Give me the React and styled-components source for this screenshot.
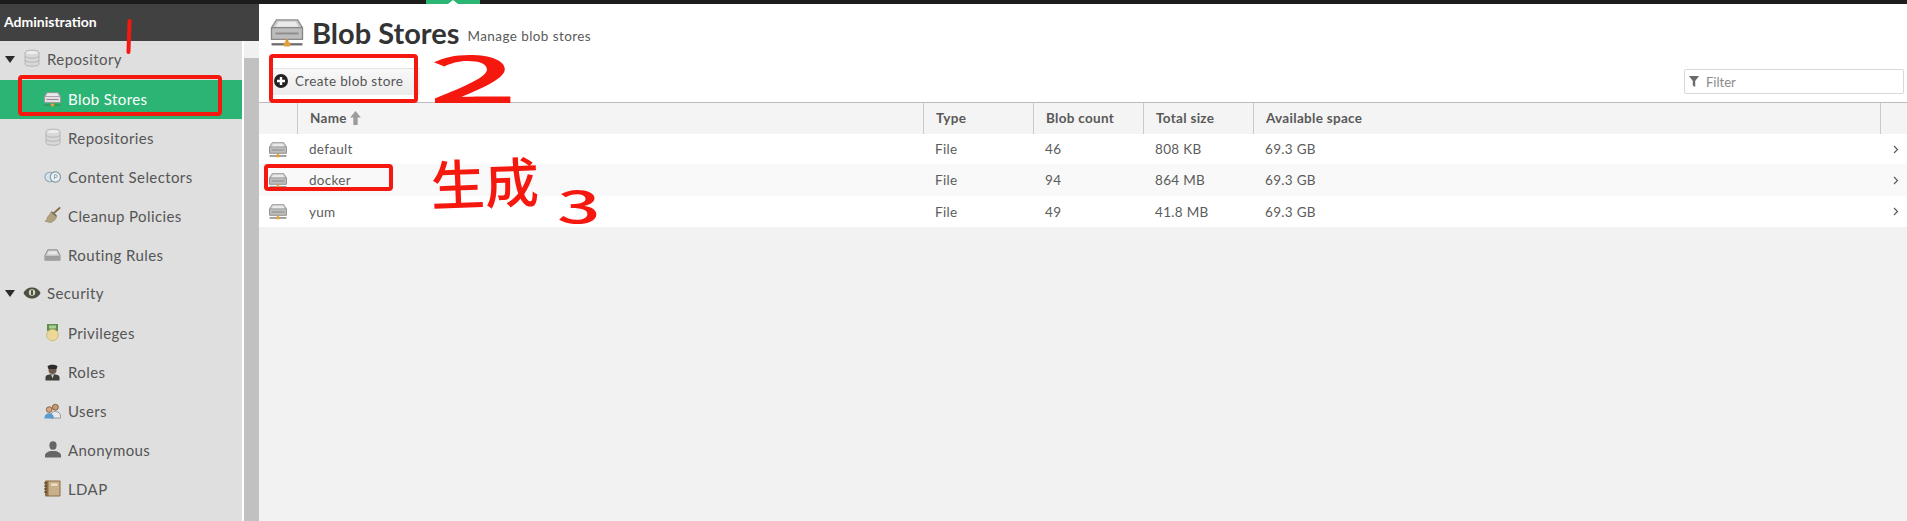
import React from "react";
import styled, { createGlobalStyle } from "styled-components";

const Global = createGlobalStyle`
  html, body { margin: 0; padding: 0; height: 521px; overflow: hidden; background: #f2f2f2; }
  * { box-sizing: border-box; }
  #root { height: 521px; }
`;

const Page = styled.div`
  position: relative;
  width: 1907px;
  height: 521px;
  overflow: hidden;
  display: flex;
  flex-direction: column;
  font-family: Lato, "Liberation Sans", sans-serif;
  color: #333;
`;
const TopBar = styled.div`
  position: relative;
  height: 4px;
  flex: none;
  background: #1c1c1c;
`;
const ActiveTab = styled.div`
  position: absolute;
  left: 426px;
  top: 0;
  width: 54px;
  height: 4px;
  background: #2ab573;
  &::after {
    content: "";
    position: absolute;
    left: 22px;
    top: 0;
    border: 5px solid transparent;
    border-top: 0;
    border-bottom: 4px solid #fff;
  }
`;
const Main = styled.div`
  flex: 1;
  min-height: 0;
  display: flex;
`;
const Sidebar = styled.aside`
  width: 259px;
  flex: none;
  display: flex;
  flex-direction: column;
  background: #fff;
`;
const SideHeader = styled.div`
  height: 37px;
  flex: none;
  background: #414141;
  color: #fff;
  font-size: 14px;
  font-weight: 700;
  display: flex;
  align-items: center;
  padding-left: 4px;
  padding-bottom: 2px;
`;
const SideBody = styled.div`
  flex: 1;
  min-height: 0;
  display: flex;
  gap: 2px;
`;
const Tree = styled.nav`
  width: 242px;
  flex: none;
  background: #dfdfdf;
  overflow: hidden;
`;
const Scrollbar = styled.div`
  width: 15px;
  flex: none;
  background: #c1c1c1;
  &::before {
    content: "";
    display: block;
    height: 17px;
    background: #f1f1f1;
  }
`;
const Row = styled.div`
  height: 39px;
  display: flex;
  align-items: center;
  padding-left: ${(p) => (p.$top ? 5 : 44)}px;
  padding-bottom: ${(p) => (p.$top ? 4 : 2)}px;
  gap: ${(p) => (p.$top ? 0 : 7)}px;
  font-size: 15px;
  letter-spacing: 0.4px;
  color: ${(p) => (p.$active ? "#fff" : "#555")};
  background: ${(p) => (p.$active ? "#2bb474" : "transparent")};
`;
const Caret = styled.span`
  width: 0;
  height: 0;
  border-left: 5px solid transparent;
  border-right: 5px solid transparent;
  border-top: 7px solid #2a2a2a;
  margin-right: 8px;
  margin-top: 2px;
  flex: none;
`;
const TopIconBox = styled.span`
  width: 18px;
  height: 22px;
  flex: none;
  margin-right: 6px;
  display: flex;
  align-items: center;
  justify-content: center;
`;
const IconBox = styled.span`
  width: 17px;
  height: 18px;
  flex: none;
  display: flex;
  align-items: center;
  justify-content: center;
`;
const Content = styled.main`
  flex: 1;
  min-width: 0;
  display: flex;
  flex-direction: column;
  background: #f2f2f2;
`;
const Head = styled.div`
  height: 98px;
  flex: none;
  background: #fff;
  display: flex;
  flex-direction: column;
`;
const TitleRow = styled.div`
  height: 48px;
  padding: 9px 0 0 11px;
  display: flex;
  align-items: center;
  flex: none;
`;
const Title = styled.h1`
  margin: 0 0 0 8px;
  font-size: 29px;
  font-weight: 700;
  color: #333;
  line-height: 30px;
`;
const Sub = styled.span`
  margin: 6px 0 0 8px;
  font-size: 13.5px;
  letter-spacing: 0.42px;
  color: #5a5a5a;
`;
const Toolbar = styled.div`
  flex: 1;
  display: flex;
  align-items: flex-start;
  justify-content: space-between;
  padding: 16px 3px 0 11px;
`;
const Button = styled.button`
  height: 27px;
  width: 150px;
  padding: 0 0 2px 4px;
  border: 0;
  border-top: 1px solid #e4e4e4;
  background: linear-gradient(#f8f8f8, #ececec);
  display: flex;
  align-items: center;
  gap: 7px;
  font: 13.5px Lato, "Liberation Sans", sans-serif;
  letter-spacing: 0.35px;
  color: #555;
`;
const FilterBox = styled.label`
  width: 220px;
  height: 25px;
  margin-top: 1px;
  border: 1px solid #d9d9d9;
  border-radius: 2px;
  background: #fff;
  display: flex;
  align-items: center;
  gap: 7px;
  padding-left: 4px;
  font-size: 13px;
  color: #8a8a8a;
`;
const Table = styled.div`
  display: flex;
  flex-direction: column;
`;
const columns = "39px 626px 110px 110px 110px 627px 26px";
const HeaderRow = styled.div`
  display: grid;
  grid-template-columns: ${columns};
  height: 32px;
  background: #f4f4f4;
  border-top: 1px solid #bcbcbc;
`;
const HeaderCell = styled.div`
  display: flex;
  align-items: center;
  gap: 3px;
  padding-left: ${(p) => (p.$empty ? 0 : 12)}px;
  padding-bottom: 2px;
  font-size: 13.5px;
  font-weight: 700;
  letter-spacing: 0.3px;
  color: #595959;
  border-right: ${(p) => (p.$last ? 0 : "1px solid #c9c9c9")};
`;
const DataRow = styled.div`
  display: grid;
  grid-template-columns: ${columns};
  height: ${(p) => p.$h}px;
  background: ${(p) => (p.$alt ? "#f9f9f9" : "#fff")};
  align-items: center;
`;
const Cell = styled.div`
  padding-left: 11px;
  font-size: 13.5px;
  letter-spacing: 0.3px;
  color: #5c5c5c;
`;
const IconCell = styled.div`
  display: flex;
  justify-content: flex-start;
  padding-left: 10px;
`;
const ChevronCell = styled.div`
  display: flex;
  justify-content: flex-end;
  padding-right: 8px;
`;
const RedBox = styled.div`
  position: absolute;
  left: ${(p) => p.$x}px;
  top: ${(p) => p.$y}px;
  width: ${(p) => p.$w}px;
  height: ${(p) => p.$h}px;
  border: 4px solid #f5180f;
  border-radius: 4px;
  pointer-events: none;
`;
const Ink = styled.span`
  position: absolute;
  left: ${(p) => p.$x}px;
  top: ${(p) => p.$y}px;
  font-family: "Noto Sans CJK SC", "Liberation Sans", sans-serif;
  font-size: ${(p) => p.$size}px;
  font-weight: 500;
  line-height: 0.75;
  color: #f5180f;
  transform: ${(p) => p.$t || "none"};
  transform-origin: left top;
  white-space: nowrap;
`;
const InkMark = styled.div`
  position: absolute;
  left: 127px;
  top: 19px;
  width: 4px;
  height: 35px;
  border-radius: 2px;
  background: #f5180f;
  transform: rotate(2deg);
`;

const Database = ({ size = 17 }) => (
  <svg width={size} height={size * 1.15} viewBox="0 0 16 18">
    <path d="M1 3.5C1 1.8 4 1 8 1s7 .8 7 2.5v11c0 1.7-3 2.5-7 2.5s-7-.8-7-2.5z" fill="#d8d8d8" stroke="#b5b5b5" />
    <path d="M1 7c1 1.5 4 2 7 2s6-.5 7-2M1 11c1 1.5 4 2 7 2s6-.5 7-2" fill="none" stroke="#b5b5b5" />
    <ellipse cx="8" cy="3.4" rx="6" ry="1.6" fill="#eee" />
  </svg>
);
const BlobIcon = ({ w = 18, h = 18, light }) => (
  <svg width={w} height={h} viewBox="0 0 34 30">
    <path d="M6 2h22l5 8v12H1V10z" fill={light ? "#d5cfd6" : "#c9c9c9"} stroke="#8d8d8d" strokeWidth="1.4" />
    <rect x="1" y="10" width="32" height="12" rx="1" fill={light ? "#e4dfe6" : "#bdbdbd"} stroke="#858585" strokeWidth="1.2" />
    <path d="M8 4h18l3 5H5z" fill="#eaeaea" />
    <rect x="5" y="15" width="24" height="2" fill="#8e8e8e" />
    <rect x="15.5" y="22" width="3" height="4" fill="#d9963a" />
    <rect x="1" y="26" width="32" height="2.4" fill={light ? "#3d8b4f" : "#6f6f6f"} />
    <rect x="13.5" y="25" width="7" height="4.5" rx="1" fill="#e0a040" />
  </svg>
);
const Venn = () => (
  <svg width="18" height="14" viewBox="0 0 18 14">
    <circle cx="6" cy="7" r="5" fill="#d7e3ea" stroke="#8fa6b4" strokeWidth="1.2" />
    <circle cx="12" cy="7" r="5.4" fill="#eef3f6" stroke="#7f97a6" strokeWidth="1.2" />
    <path d="M11 4.5v5M11 4.7h1.8a1.4 1.4 0 010 2.8H11" fill="none" stroke="#7f97a6" strokeWidth="0.9" />
  </svg>
);
const Broom = () => (
  <svg width="19" height="19" viewBox="0 0 18 18">
    <path d="M11 6L16.5 1" stroke="#8b6a45" strokeWidth="2" strokeLinecap="round" />
    <path d="M8 4.5l5.5 5c-.6 3.4-3.4 6.4-7 7L1 15c2.500-.8 2.500-2 2.200-3.400C4.200 10 6.200 8 8 4.500z" fill="#b0a27c" stroke="#8c8062" strokeWidth=".6" />
    <path d="M8.500 5.500l4.500 4" stroke="#69695a" strokeWidth="1.600" />
  </svg>
);
const Tray = () => (
  <svg width="18" height="14" viewBox="0 0 18 13">
    <path d="M4 1h10l3 6v5H1V7z" fill="#c8c8c8" stroke="#8a8a8a" />
    <path d="M1.500 7.500h15v4h-15z" fill="#9d9d9d" />
    <path d="M5 2.500h8l1.500 3.500h-11z" fill="#e6e6e6" />
  </svg>
);
const Eye = () => (
  <svg width="18" height="14" viewBox="0 0 18 13">
    <path d="M.5 6.500C2.500 2.500 5.500 1 9 1s6.500 1.500 8.500 5.500C15.500 10.500 12.500 12 9 12S2.500 10.500.5 6.500z" fill="#4b5340" />
    <circle cx="9" cy="6" r="3.200" fill="#d6d6c4" />
    <rect x="8.200" y="3.800" width="1.600" height="4.500" fill="#2e2e22" />
  </svg>
);
const Medal = () => (
  <svg width="13" height="19" viewBox="0 0 13 18">
    <rect x="1" y="0.500" width="11" height="7" fill="#5e8f4e" />
    <rect x="3" y="2" width="7" height="3" fill="#a9d094" />
    <circle cx="6.500" cy="11.500" r="5.800" fill="#ecd99a" stroke="#c9b06a" strokeWidth=".8" />
  </svg>
);
const Officer = () => (
  <svg width="15" height="18" viewBox="0 0 15 18">
    <path d="M0.500 17.500v-3c0-2 2.500-3.200 7-3.200s7 1.200 7 3.200v3z" fill="#3f4138" />
    <path d="M6 11.500h3l-1.500 4z" fill="#cfcfcf" />
    <circle cx="7.500" cy="7" r="4" fill="#6e5a4a" />
    <path d="M2.500 3.500C3.500 1 11.500 1 12.500 3.500L11.500 6h-8z" fill="#2b2b2b" />
  </svg>
);
const People = () => (
  <svg width="18" height="18" viewBox="0 0 18 17">
    <circle cx="12" cy="4.500" r="3.200" fill="#c79a72" stroke="#6a4a33" strokeWidth=".8" />
    <path d="M7 14c0-3 2-5 5-5s5.500 2 5.500 5v2H7z" fill="#e9e9e9" stroke="#777" strokeWidth=".7" />
    <circle cx="5.500" cy="7" r="3" fill="#d8a781" stroke="#6a4a33" strokeWidth=".8" />
    <path d="M.5 16c0-3 2-5.200 5-5.200s5 2.200 5 5.200v.5h-10z" fill="#5a9bd0" />
  </svg>
);
const Person = () => (
  <svg width="16" height="17" viewBox="0 0 16 17">
    <ellipse cx="8" cy="4.500" rx="3.600" ry="4.200" fill="#666" />
    <path d="M0 16.500v-2c0-2.500 3.500-4 5.500-4.500h5c2 .5 5.500 2 5.500 4.500v2z" fill="#666" />
  </svg>
);
const BookIcon = () => (
  <svg width="17" height="17" viewBox="0 0 17 17">
    <rect x="1" y="0.500" width="15.500" height="16" rx="1" fill="#8f6d43" />
    <rect x="4.500" y="1.500" width="11" height="14" fill="#c8b18a" />
    <rect x="7" y="3.500" width="6.500" height="2.200" fill="#efe4cf" />
    <path d="M0 3h3M0 6h3M0 9h3M0 12h3" stroke="#4d3a22" strokeWidth="1" />
  </svg>
);
const PlusCircle = () => (
  <svg width="14" height="14" viewBox="0 0 14 14">
    <circle cx="7" cy="7" r="7" fill="#222" />
    <path d="M7 3v8M3 7h8" stroke="#fff" strokeWidth="2.400" />
  </svg>
);
const FunnelIcon = () => (
  <svg width="10" height="11" viewBox="0 0 10 11">
    <path d="M0 0h10L6.200 5v6L3.800 9.500V5z" fill="#6b6b6b" />
  </svg>
);
const SortArrow = () => (
  <svg width="11" height="14" viewBox="0 0 10 13">
    <path d="M5 0l5 6H7v7H3V6H0z" fill="#9c9c9c" />
  </svg>
);
const Chevron = () => (
  <svg width="6" height="9" viewBox="0 0 6 9">
    <path d="M1 1l3.500 3.500L1 8" fill="none" stroke="#555" strokeWidth="1.100" />
  </svg>
);

const nav = [
  { label: "Repository", top: true, icon: <Database size={16} /> },
  { label: "Blob Stores", active: true, icon: <BlobIcon light /> },
  { label: "Repositories", icon: <Database size={16} /> },
  { label: "Content Selectors", icon: <Venn /> },
  { label: "Cleanup Policies", icon: <Broom /> },
  { label: "Routing Rules", icon: <Tray /> },
  { label: "Security", top: true, icon: <Eye /> },
  { label: "Privileges", icon: <Medal /> },
  { label: "Roles", icon: <Officer /> },
  { label: "Users", icon: <People /> },
  { label: "Anonymous", icon: <Person /> },
  { label: "LDAP", icon: <BookIcon /> },
];

const stores = [
  { name: "default", count: 46, size: "808 KB", h: 30 },
  { name: "docker", count: 94, size: "864 MB", h: 32, alt: true },
  { name: "yum", count: 49, size: "41.8 MB", h: 31 },
];

export default function App() {
  return (
    <Page>
      <Global />
      <TopBar>
        <ActiveTab />
      </TopBar>
      <Main>
        <Sidebar>
          <SideHeader>Administration</SideHeader>
          <SideBody>
            <Tree>
              {nav.map((n) =>
                n.top ? (
                  <Row key={n.label} $top>
                    <Caret />
                    <TopIconBox>{n.icon}</TopIconBox>
                    {n.label}
                  </Row>
                ) : (
                  <Row key={n.label} $active={n.active}>
                    <IconBox>{n.icon}</IconBox>
                    {n.label}
                  </Row>
                )
              )}
            </Tree>
            <Scrollbar />
          </SideBody>
        </Sidebar>
        <Content>
          <Head>
            <TitleRow>
              <BlobIcon w={34} h={29} />
              <Title>Blob Stores</Title>
              <Sub>Manage blob stores</Sub>
            </TitleRow>
            <Toolbar>
              <Button>
                <PlusCircle />
                Create blob store
              </Button>
              <FilterBox>
                <FunnelIcon />
                Filter
              </FilterBox>
            </Toolbar>
          </Head>
          <Table>
            <HeaderRow>
              <HeaderCell $empty />
              <HeaderCell>
                Name <SortArrow />
              </HeaderCell>
              <HeaderCell>Type</HeaderCell>
              <HeaderCell>Blob count</HeaderCell>
              <HeaderCell>Total size</HeaderCell>
              <HeaderCell>Available space</HeaderCell>
              <HeaderCell $empty $last />
            </HeaderRow>
            {stores.map((s) => (
              <DataRow key={s.name} $h={s.h} $alt={s.alt}>
                <IconCell>
                  <BlobIcon w={18} h={17} />
                </IconCell>
                <Cell>{s.name}</Cell>
                <Cell>File</Cell>
                <Cell>{s.count}</Cell>
                <Cell>{s.size}</Cell>
                <Cell>69.3 GB</Cell>
                <ChevronCell>
                  <Chevron />
                </ChevronCell>
              </DataRow>
            ))}
          </Table>
        </Content>
      </Main>
      <InkMark />
      <RedBox $x={18} $y={75} $w={204} $h={41} />
      <RedBox $x={269} $y={54} $w={149} $h={49} />
      <RedBox $x={264} $y={164} $w={129} $h={27} />
      <Ink $x={428} $y={50} $size={66} $t="scaleX(2.4)">2</Ink>
      <Ink $x={430} $y={163} $size={54} $t="rotate(-2deg)">生成</Ink>
      <Ink $x={557} $y={187} $size={45} $t="scaleX(1.7)">3</Ink>
    </Page>
  );
}
